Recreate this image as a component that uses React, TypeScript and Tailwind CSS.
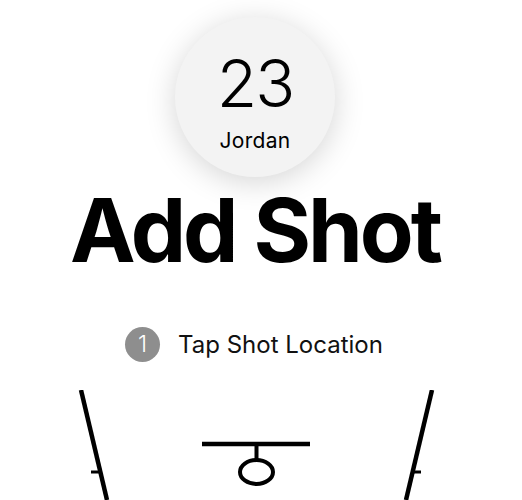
import React from 'react';

const Court: React.FC = () => (
  <svg width="510" height="110" viewBox="0 0 510 110" className="block mt-[28px]">
    <g stroke="#000" strokeLinecap="butt" fill="none">
      <line x1="81" y1="0" x2="107" y2="110" strokeWidth="4.5" />
      <line x1="432" y1="0" x2="406" y2="110" strokeWidth="4.5" />
      <line x1="91" y1="82" x2="100" y2="82" strokeWidth="3" />
      <line x1="413" y1="82" x2="421" y2="82" strokeWidth="3" />
      <line x1="202" y1="54" x2="310" y2="54" strokeWidth="4.5" />
      <line x1="256.5" y1="54" x2="256.5" y2="70" strokeWidth="4" />
      <ellipse cx="256.5" cy="82" rx="16.5" ry="12" strokeWidth="4" />
    </g>
  </svg>
);

export default function App() {
  return (
    <div className="w-[522px] h-[500px] bg-white overflow-hidden font-['Inter','Liberation_Sans',sans-serif] text-black">
      <div className="w-[510px] flex flex-col items-center">
        <div className="mt-[17px] w-40 h-40 rounded-full bg-[#f3f3f3] shadow-[0_5px_30px_rgba(0,0,0,0.17)] flex flex-col items-center justify-center">
          <span className="text-[66px] font-light leading-none tracking-[-2px] mt-[6px]">23</span>
          <span className="text-[21px] leading-none tracking-[0.3px] mt-[14px]">Jordan</span>
        </div>
        <h1 className="text-[88px] font-bold leading-none tracking-[-3px] mt-[9px]">Add Shot</h1>
        <div className="flex items-center gap-[18px] mt-[53px] pr-[2px]">
          <span className="w-[35px] h-[35px] rounded-full bg-[#8e8e8e] text-white flex items-center justify-center text-[23px] font-light leading-none">1</span>
          <span className="text-[24px] leading-none text-[#111]">Tap Shot Location</span>
        </div>
        <Court />
      </div>
    </div>
  );
}
